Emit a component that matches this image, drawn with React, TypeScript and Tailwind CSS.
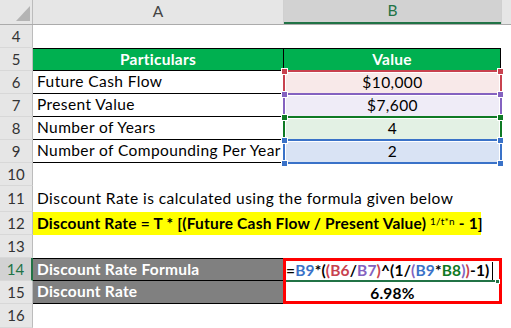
import React from "react";

const font = { fontFamily: "Lato, 'Liberation Sans', sans-serif" };

const RowHead = ({ n, h, active }: { n: number; h: string; active?: boolean }) => (
  <div
    className={`w-[33px] shrink-0 ${h} flex items-center justify-center text-[15px] border-b border-b-[#d8d8d8] ${
      active ? "bg-[#d2d2d2] text-[#217346] border-r-2 border-r-[#217346]" : "bg-[#e6e6e6] text-[#333] border-r border-r-[#bcbcbc]"
    }`}
  >
    {n}
  </div>
);

type Ref = { text: string; fill: string; line: string; handle: string };

const refs: Ref[] = [
  { text: "$10,000", fill: "bg-[#f8e9e9]", line: "border-[#c8424f]", handle: "bg-[#c8424f]" },
  { text: "$7,600", fill: "bg-[#efecf7]", line: "border-[#8462c0]", handle: "bg-[#8462c0]" },
  { text: "4", fill: "bg-[#e3f1e4]", line: "border-[#0f7a24]", handle: "bg-[#0f7a24]" },
  { text: "2", fill: "bg-[#d9e3f4]", line: "border-[#3a72c8]", handle: "bg-[#3a72c8]" },
];

const labels = ["Future Cash Flow", "Present Value", "Number of Years", "Number of Compounding Per Year"];

const Handle = ({ cls, pos }: { cls: string; pos: string }) => (
  <div className={`absolute ${pos} w-[7px] h-[7px] ${cls} border border-white`} />
);

export default function App() {
  return (
    <div className="w-[511px] h-[328px] bg-white overflow-hidden text-black" style={font}>
      {/* column headers */}
      <div className="flex h-[25px] border-b border-[#ababab]">
        <div className="w-[33px] shrink-0 bg-[#e6e6e6] border-r border-[#bcbcbc] relative">
          <svg className="absolute left-0 top-0" width="33" height="24" viewBox="0 0 33 24">
            <polygon points="16,21 30,21 30,6" fill="#b4b4b4" />
          </svg>
        </div>
        <div className="w-[251px] shrink-0 bg-[#e6e6e6] border-r border-[#d0d0d0] flex items-center justify-center text-[15.5px] text-[#444]">
          A
        </div>
        <div className="w-[217px] shrink-0 bg-[#d2d2d2] border-b-2 border-[#217346] flex items-center justify-center text-[15.5px] text-[#217346]">
          B
        </div>
        <div className="flex-1 bg-[#e6e6e6] border-l border-[#d0d0d0]" />
      </div>

      {/* row 4 */}
      <div className="flex h-[23px]">
        <RowHead n={4} h="h-[23px]" />
      </div>

      {/* row 5 */}
      <div className="flex h-[23px]">
        <RowHead n={5} h="h-[23px]" />
        <div className="w-[251px] shrink-0 bg-[#00b050] border-y border-r border-black flex items-center justify-center text-white font-bold text-[15.5px] tracking-[0.25px]">
          Particulars
        </div>
        <div className="w-[217px] shrink-0 bg-[#00b050] border-y border-r border-black flex items-center justify-center text-white font-bold text-[15.5px] tracking-[0.25px]">
          Value
        </div>
      </div>

      {/* rows 6-9 */}
      {refs.map((r, i) => (
        <div key={i} className="flex h-[23px]">
          <RowHead n={6 + i} h="h-[23px]" />
          <div className="w-[251px] shrink-0 border-b border-black flex items-center pl-[4px] text-[15.5px] tracking-[0.4px] whitespace-nowrap">
            {labels[i]}
          </div>
          <div className="w-[217px] shrink-0 relative">
            <div className={`absolute left-[2px] right-[2px] top-[2px] bottom-[1px] ${r.fill} flex items-center justify-center text-[15.5px] tracking-[0.4px]`}>
              {r.text}
            </div>
            <div className={`absolute -left-[1px] -right-[1px] -top-[1px] -bottom-[1px] border-2 ${r.line}`} />
            <Handle cls={r.handle} pos="-left-[3px] -top-[3px]" />
            <Handle cls={r.handle} pos="-right-[3px] -top-[3px]" />
            <Handle cls={r.handle} pos="-left-[3px] -bottom-[4px]" />
            <Handle cls={r.handle} pos="-right-[3px] -bottom-[4px]" />
          </div>
        </div>
      ))}

      {/* row 10 */}
      <div className="flex h-[23px]">
        <RowHead n={10} h="h-[23px]" />
      </div>

      {/* row 11 */}
      <div className="flex h-[26px]">
        <RowHead n={11} h="h-[26px]" />
        <div className="flex items-center pl-[4px] text-[15.5px] tracking-[0.45px] whitespace-nowrap">
          Discount Rate is calculated using the formula given below
        </div>
      </div>

      {/* row 12 */}
      <div className="flex h-[23px]">
        <RowHead n={12} h="h-[23px]" />
        <div className="w-[448px] shrink-0 bg-[#ffff00] flex items-center pl-[4px] text-[15.5px] tracking-[0.2px] font-bold whitespace-nowrap">
          Discount Rate = T * [(Future Cash Flow / Present Value)&nbsp;
          <sup className="text-[10px] font-normal relative -top-[3px]">1/t*n</sup>
          &nbsp;- 1]
        </div>
      </div>

      {/* row 13 */}
      <div className="flex h-[23px]">
        <RowHead n={13} h="h-[23px]" />
      </div>

      {/* rows 14-15 */}
      <div className="flex h-[46px]">
        <div className="w-[284px] shrink-0 flex flex-col">
          <div className="flex h-[23px]">
            <RowHead n={14} h="h-[23px]" active />
            <div className="flex-1 bg-[#808080] border-y border-black flex items-center pl-[4px] text-[15.5px] tracking-[0.25px] font-bold text-white">
              Discount Rate Formula
            </div>
          </div>
          <div className="flex h-[23px]">
            <RowHead n={15} h="h-[23px]" />
            <div className="flex-1 bg-[#808080] border-b border-black flex items-center pl-[4px] text-[15.5px] tracking-[0.25px] font-bold text-white">
              Discount Rate
            </div>
          </div>
        </div>
        <div className="w-[219px] -ml-[1px] shrink-0 border-[3px] border-[#ff0000] flex flex-col">
          <div className="h-[21px] border-b-2 border-[#217346] flex items-center text-[15.5px] tracking-[0.15px] font-bold whitespace-nowrap relative">
            <span>=</span>
            <span className="text-[#3a72c8]">B9</span>
            <span>*(</span>
            <span className="text-[#c8424f]">(B6</span>
            <span>/</span>
            <span className="text-[#8462c0]">B7</span>
            <span className="text-[#c8424f]">)</span>
            <span>^(1/</span>
            <span className="text-[#8462c0]">(</span>
            <span className="text-[#3a72c8]">B9</span>
            <span>*</span>
            <span className="text-[#0f7a24]">B8</span>
            <span className="text-[#8462c0]">)</span>
            <span className="text-[#c8424f]">)</span>
            <span>-1)</span>
            <span className="ml-[2px] w-px h-[18px] bg-black" />
            <div className="absolute -right-[1px] -bottom-[4px] w-[5px] h-[5px] bg-[#217346] border border-white" />
          </div>
          <div className="flex-1 flex items-center justify-center text-[15.5px] tracking-[0.25px] font-bold">6.98%</div>
        </div>
      </div>

      {/* row 16 */}
      <div className="flex h-[24px]">
        <RowHead n={16} h="h-[24px]" />
      </div>
    </div>
  );
}
